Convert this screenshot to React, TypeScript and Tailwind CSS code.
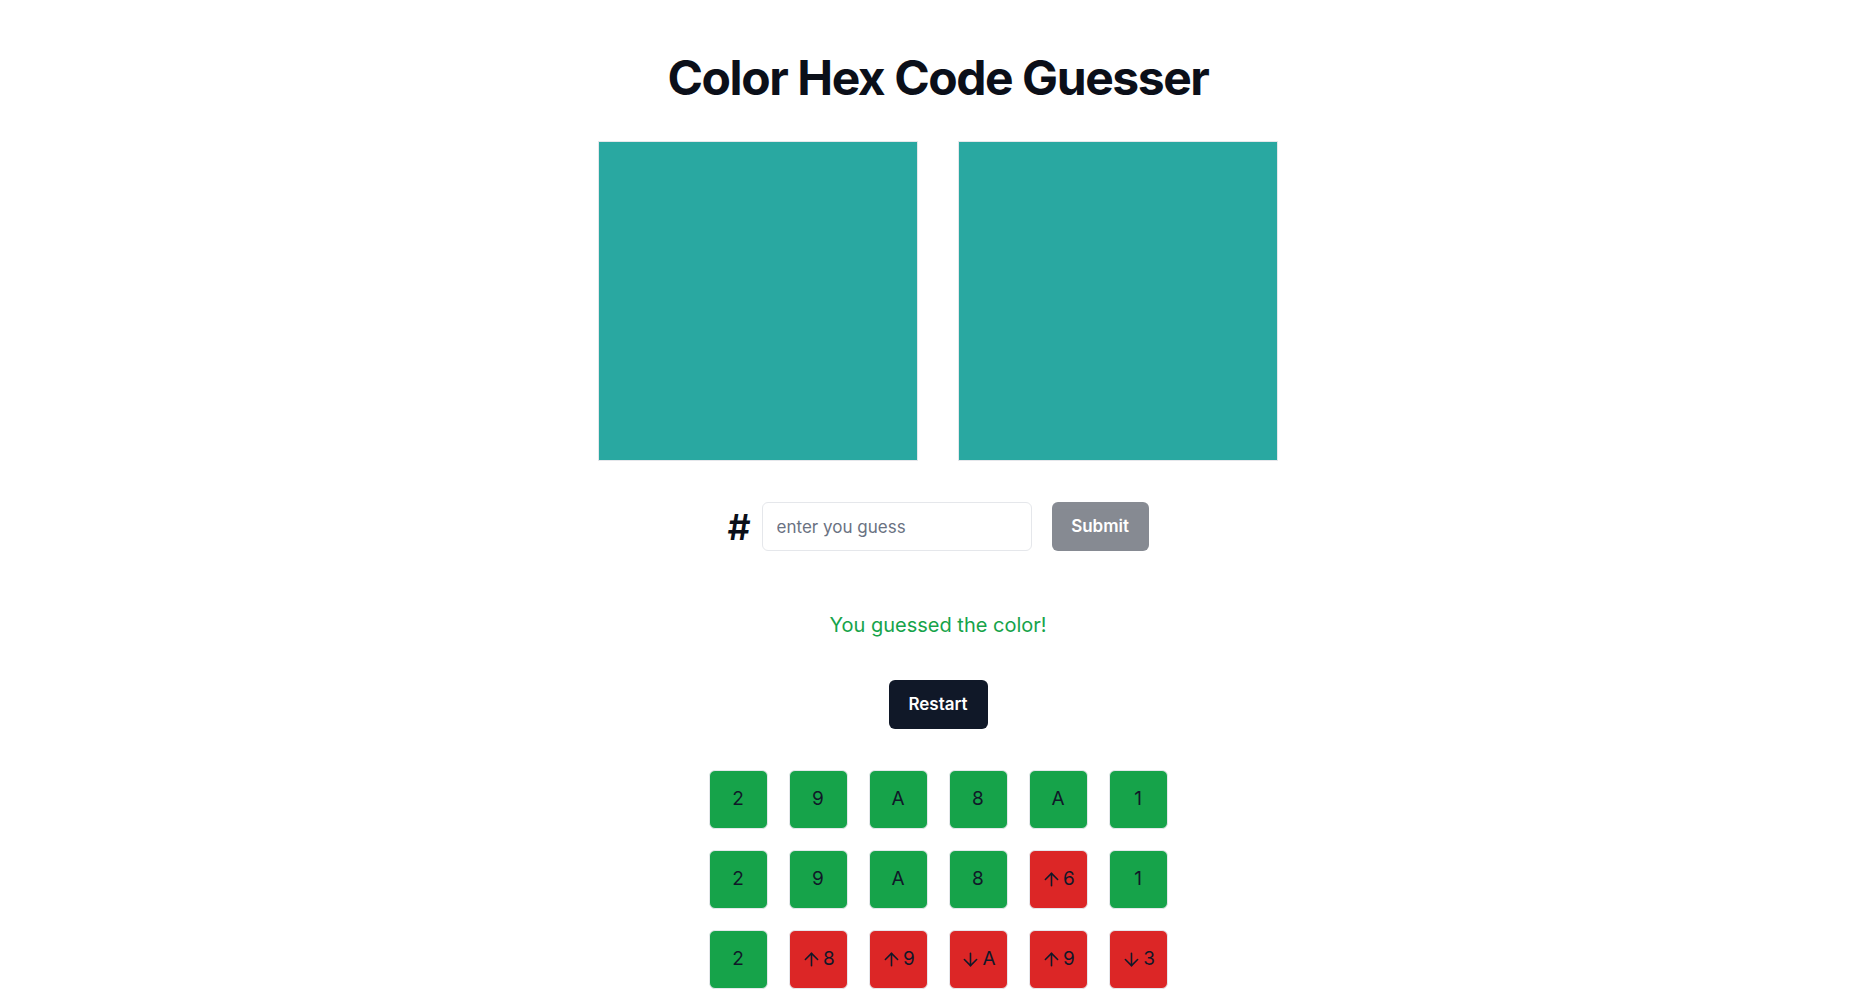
import { useState } from "react";
import { ArrowDown, ArrowUp } from "lucide-react";

const TARGET = "29A8A1";

type Cell = { ch: string; hint?: "up" | "down" };

const rows: Cell[][] = [
  [{ ch: "2" }, { ch: "9" }, { ch: "A" }, { ch: "8" }, { ch: "A" }, { ch: "1" }],
  [{ ch: "2" }, { ch: "9" }, { ch: "A" }, { ch: "8" }, { ch: "6", hint: "up" }, { ch: "1" }],
  [
    { ch: "2" },
    { ch: "8", hint: "up" },
    { ch: "9", hint: "up" },
    { ch: "A", hint: "down" },
    { ch: "9", hint: "up" },
    { ch: "3", hint: "down" },
  ],
];

function Tile({ cell }: { cell: Cell }) {
  const ok = !cell.hint;
  return (
    <div
      className={`flex h-[59px] w-[59px] items-center justify-center rounded-md border border-gray-200 text-[19px] text-[#101828] ${
        ok ? "bg-[#16a34a]" : "bg-[#dc2626]"
      }`}
    >
      {cell.hint === "up" && <ArrowUp size={21} strokeWidth={1.8} className="mr-px" />}
      {cell.hint === "down" && <ArrowDown size={21} strokeWidth={1.8} className="mr-px" />}
      {cell.ch}
    </div>
  );
}

export default function App() {
  const [guess, setGuess] = useState("");

  return (
    <div className="min-h-screen bg-white font-['Inter',sans-serif] text-[#0b0f19]">
      <div className="flex flex-col items-center pl-3 pt-[54px]">
        <h1 className="text-5xl leading-none font-bold tracking-[-0.03em]">Color Hex Code Guesser</h1>

        {/* target + guess swatches */}
        <div className="mt-[39px] flex gap-10">
          <div className="h-80 w-80 border border-gray-200 bg-[#29a8a1]" />
          <div className="h-80 w-80 border border-gray-200 bg-[#29a8a1]" />
        </div>

        <div className="mt-[41px] flex items-center">
          <span className="mr-[11px] text-4xl font-semibold">#</span>
          <input
            value={guess}
            onChange={(e) => setGuess(e.target.value)}
            placeholder="enter you guess"
            className="h-[49px] w-[270px] rounded-md border border-gray-200 bg-white px-[14px] text-[17px] outline-none placeholder:text-gray-500"
          />
          <button
            disabled
            className="ml-5 h-[49px] w-[97px] rounded-md bg-[#101828] text-[17px] font-semibold text-white opacity-50"
          >
            Submit
          </button>
        </div>

        <p className="mt-[60px] text-xl leading-7 text-[#16a34a]">You guessed the color!</p>

        <button className="mt-[41px] h-[49px] w-[99px] rounded-md bg-[#101828] text-[17px] font-semibold text-white">
          Restart
        </button>

        <div className="mt-[41px] flex flex-col gap-[21px]" data-target={TARGET}>
          {rows.map((row, i) => (
            <div key={i} className="flex gap-[21px]">
              {row.map((c, j) => (
                <Tile key={j} cell={c} />
              ))}
            </div>
          ))}
        </div>
      </div>
    </div>
  );
}
